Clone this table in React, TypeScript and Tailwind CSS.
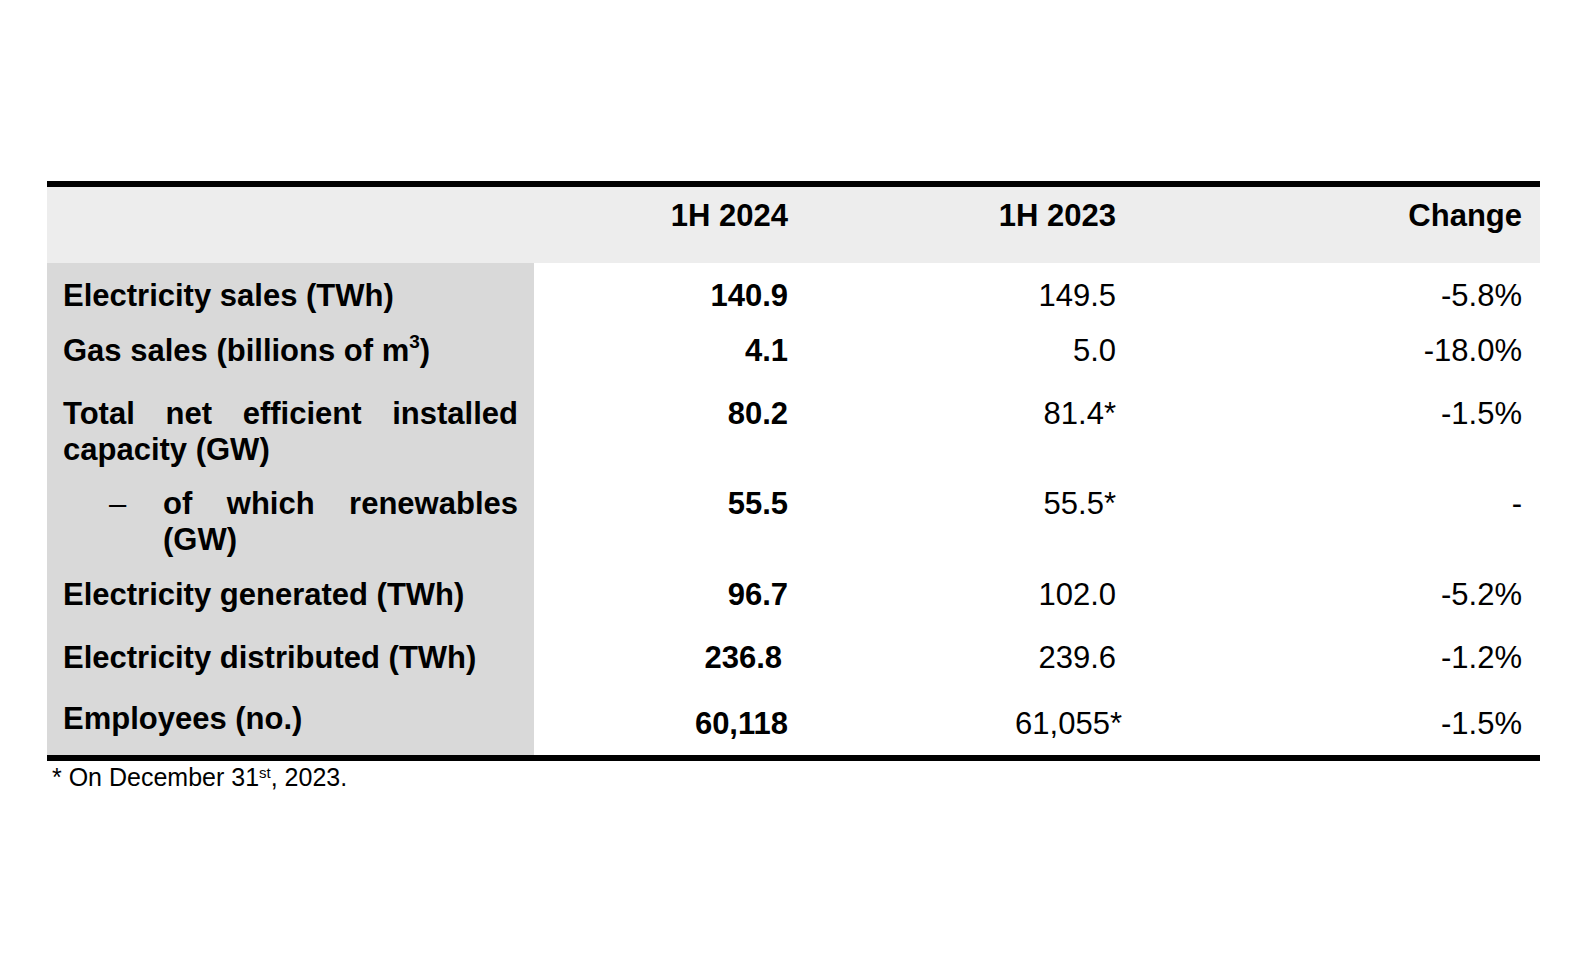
import type { ReactNode } from 'react';

interface Row {
  label: ReactNode;
  cur: ReactNode;
  prev: string;
  change: string;
  h: string;
  pt: string;
  vpt?: string;
  sub?: boolean;
}

const rows: Row[] = [
  { label: 'Electricity sales (TWh)', cur: '140.9', prev: '149.5', change: '-5.8%', h: 'h-[59px]', pt: 'pt-[15px]' },
  {
    label: (
      <>
        Gas sales (billions of m<sup className="text-[19px] -top-[0.7em]">3</sup>)
      </>
    ),
    cur: '4.1',
    prev: '5.0',
    change: '-18.0%',
    h: 'h-[62px]',
    pt: 'pt-[11px]',
  },
  { label: 'Total net efficient installed capacity (GW)', cur: '80.2', prev: '81.4*', change: '-1.5%', h: 'h-[91px]', pt: 'pt-[12px]' },
  { label: 'of which renewables (GW)', cur: '55.5', prev: '55.5*', change: '-', h: 'h-[90px]', pt: 'pt-[11px]', sub: true },
  { label: 'Electricity generated (TWh)', cur: '96.7', prev: '102.0', change: '-5.2%', h: 'h-[63px]', pt: 'pt-[12px]' },
  { label: 'Electricity distributed (TWh)', cur: <span className="pr-[6px]">236.8</span>, prev: '239.6', change: '-1.2%', h: 'h-[60px]', pt: 'pt-[12px]' },
  { label: 'Employees (no.)', cur: '60,118', prev: '61,055*', change: '-1.5%', h: 'h-[67px]', pt: 'pt-[13px]', vpt: 'pt-[18px]' },
];

export default function App() {
  return (
    <div className="w-[1584px] h-[960px] bg-white text-black font-['Liberation_Sans',Arial,sans-serif]">
      <div className="pt-[181px] pl-[47px]">
        <div className="w-[1493px] border-t-[6px] border-b-[6px] border-black text-[31px] leading-[36px]">
          {/* Header */}
          <div className="grid grid-cols-[487px_272px_328px_406px] h-[76px] bg-[#ededed] font-bold pt-[11px]">
            <div></div>
            <div className="text-right pr-[18px]">1H 2024</div>
            <div className="text-right pr-[18px]">1H 2023</div>
            <div className="text-right pr-[18px]">Change</div>
          </div>

          {/* Rows */}
          {rows.map((row, i) => (
            <div key={i} className={`grid grid-cols-[487px_272px_328px_406px] ${row.h}`}>
              <div className={`bg-[#d9d9d9] font-bold pl-[16px] pr-[16px] ${row.pt}`}>
                {row.sub ? (
                  <div className="flex pl-[46px]">
                    <span className="w-[54px] shrink-0 font-normal">–</span>
                    <span className="text-justify">{row.label}</span>
                  </div>
                ) : (
                  <div className="text-justify">{row.label}</div>
                )}
              </div>
              <div className={`text-right pr-[18px] font-bold ${row.vpt ?? row.pt}`}>{row.cur}</div>
              <div className={`text-right ${row.vpt ? 'pr-[12px]' : 'pr-[18px]'} ${row.vpt ?? row.pt}`}>{row.prev}</div>
              <div className={`text-right pr-[18px] ${row.vpt ?? row.pt}`}>{row.change}</div>
            </div>
          ))}
        </div>

        <div className="pl-[5px] pt-[2px] text-[25px] leading-[29px]">
          * On December 31<sup className="text-[15px] -top-[0.55em]">st</sup>, 2023.
        </div>
      </div>
    </div>
  );
}
